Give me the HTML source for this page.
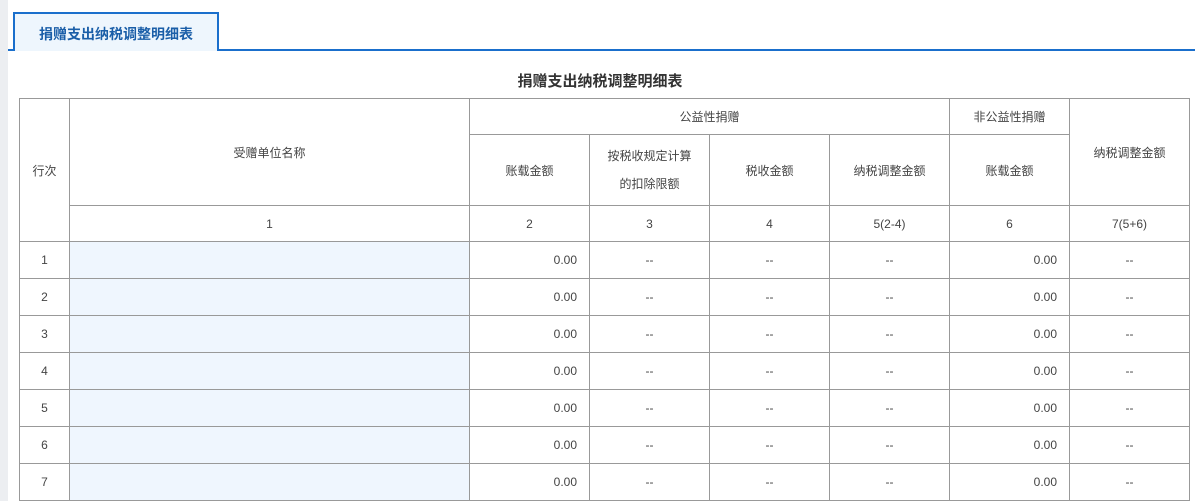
<!DOCTYPE html>
<html><head><meta charset="utf-8"><style>
*{margin:0;padding:0;box-sizing:border-box}
body{width:1195px;height:501px;overflow:hidden;background:#fff;font-family:"Liberation Sans","Noto Sans CJK SC",sans-serif;color:#333;position:relative}
.strip{position:absolute;left:0;top:0;width:8px;height:501px;background:#eceef1}
.line{position:absolute;left:8px;right:0;top:49px;height:2px;background:#1a6fcc}
.tab{position:absolute;left:13px;top:12px;width:206px;height:39px;border:2px solid #1a6fcc;border-bottom:none;background:#eef6fd;color:#1a5ea8;font-weight:bold;font-size:14px;text-align:center;line-height:40px}
.title{position:absolute;left:0;width:1200px;top:70px;text-align:center;font-weight:bold;font-size:15px;color:#333}
table{position:absolute;left:19px;top:98px;border-collapse:collapse;table-layout:fixed;width:1171px;font-size:12px}
td{border:1px solid #999;text-align:center;vertical-align:middle;color:#444}
.r{text-align:right;padding-right:12px}
.b{background:#eff6fe}
.d td{height:37px}
</style></head><body>
<div class="strip"></div>
<div class="line"></div>
<div class="tab">捐赠支出纳税调整明细表</div>
<div class="title">捐赠支出纳税调整明细表</div>
<table>
<colgroup><col style="width:50px"><col style="width:400px"><col style="width:120px"><col style="width:120px"><col style="width:120px"><col style="width:120px"><col style="width:120px"><col style="width:120px"></colgroup>
<tr style="height:36px"><td rowspan="3">行次</td><td rowspan="2">受赠单位名称</td><td colspan="4">公益性捐赠</td><td>非公益性捐赠</td><td rowspan="2">纳税调整金额</td></tr>
<tr style="height:71px"><td>账载金额</td><td style="line-height:28px">按税收规定计算<br>的扣除限额</td><td>税收金额</td><td>纳税调整金额</td><td>账载金额</td></tr>
<tr style="height:36px"><td>1</td><td>2</td><td>3</td><td>4</td><td>5(2-4)</td><td>6</td><td>7(5+6)</td></tr>
<tr class="d"><td>1</td><td class="b"></td><td class="r">0.00</td><td>--</td><td>--</td><td>--</td><td class="r">0.00</td><td>--</td></tr>
<tr class="d"><td>2</td><td class="b"></td><td class="r">0.00</td><td>--</td><td>--</td><td>--</td><td class="r">0.00</td><td>--</td></tr>
<tr class="d"><td>3</td><td class="b"></td><td class="r">0.00</td><td>--</td><td>--</td><td>--</td><td class="r">0.00</td><td>--</td></tr>
<tr class="d"><td>4</td><td class="b"></td><td class="r">0.00</td><td>--</td><td>--</td><td>--</td><td class="r">0.00</td><td>--</td></tr>
<tr class="d"><td>5</td><td class="b"></td><td class="r">0.00</td><td>--</td><td>--</td><td>--</td><td class="r">0.00</td><td>--</td></tr>
<tr class="d"><td>6</td><td class="b"></td><td class="r">0.00</td><td>--</td><td>--</td><td>--</td><td class="r">0.00</td><td>--</td></tr>
<tr class="d"><td>7</td><td class="b"></td><td class="r">0.00</td><td>--</td><td>--</td><td>--</td><td class="r">0.00</td><td>--</td></tr>
</table>
</body></html>
